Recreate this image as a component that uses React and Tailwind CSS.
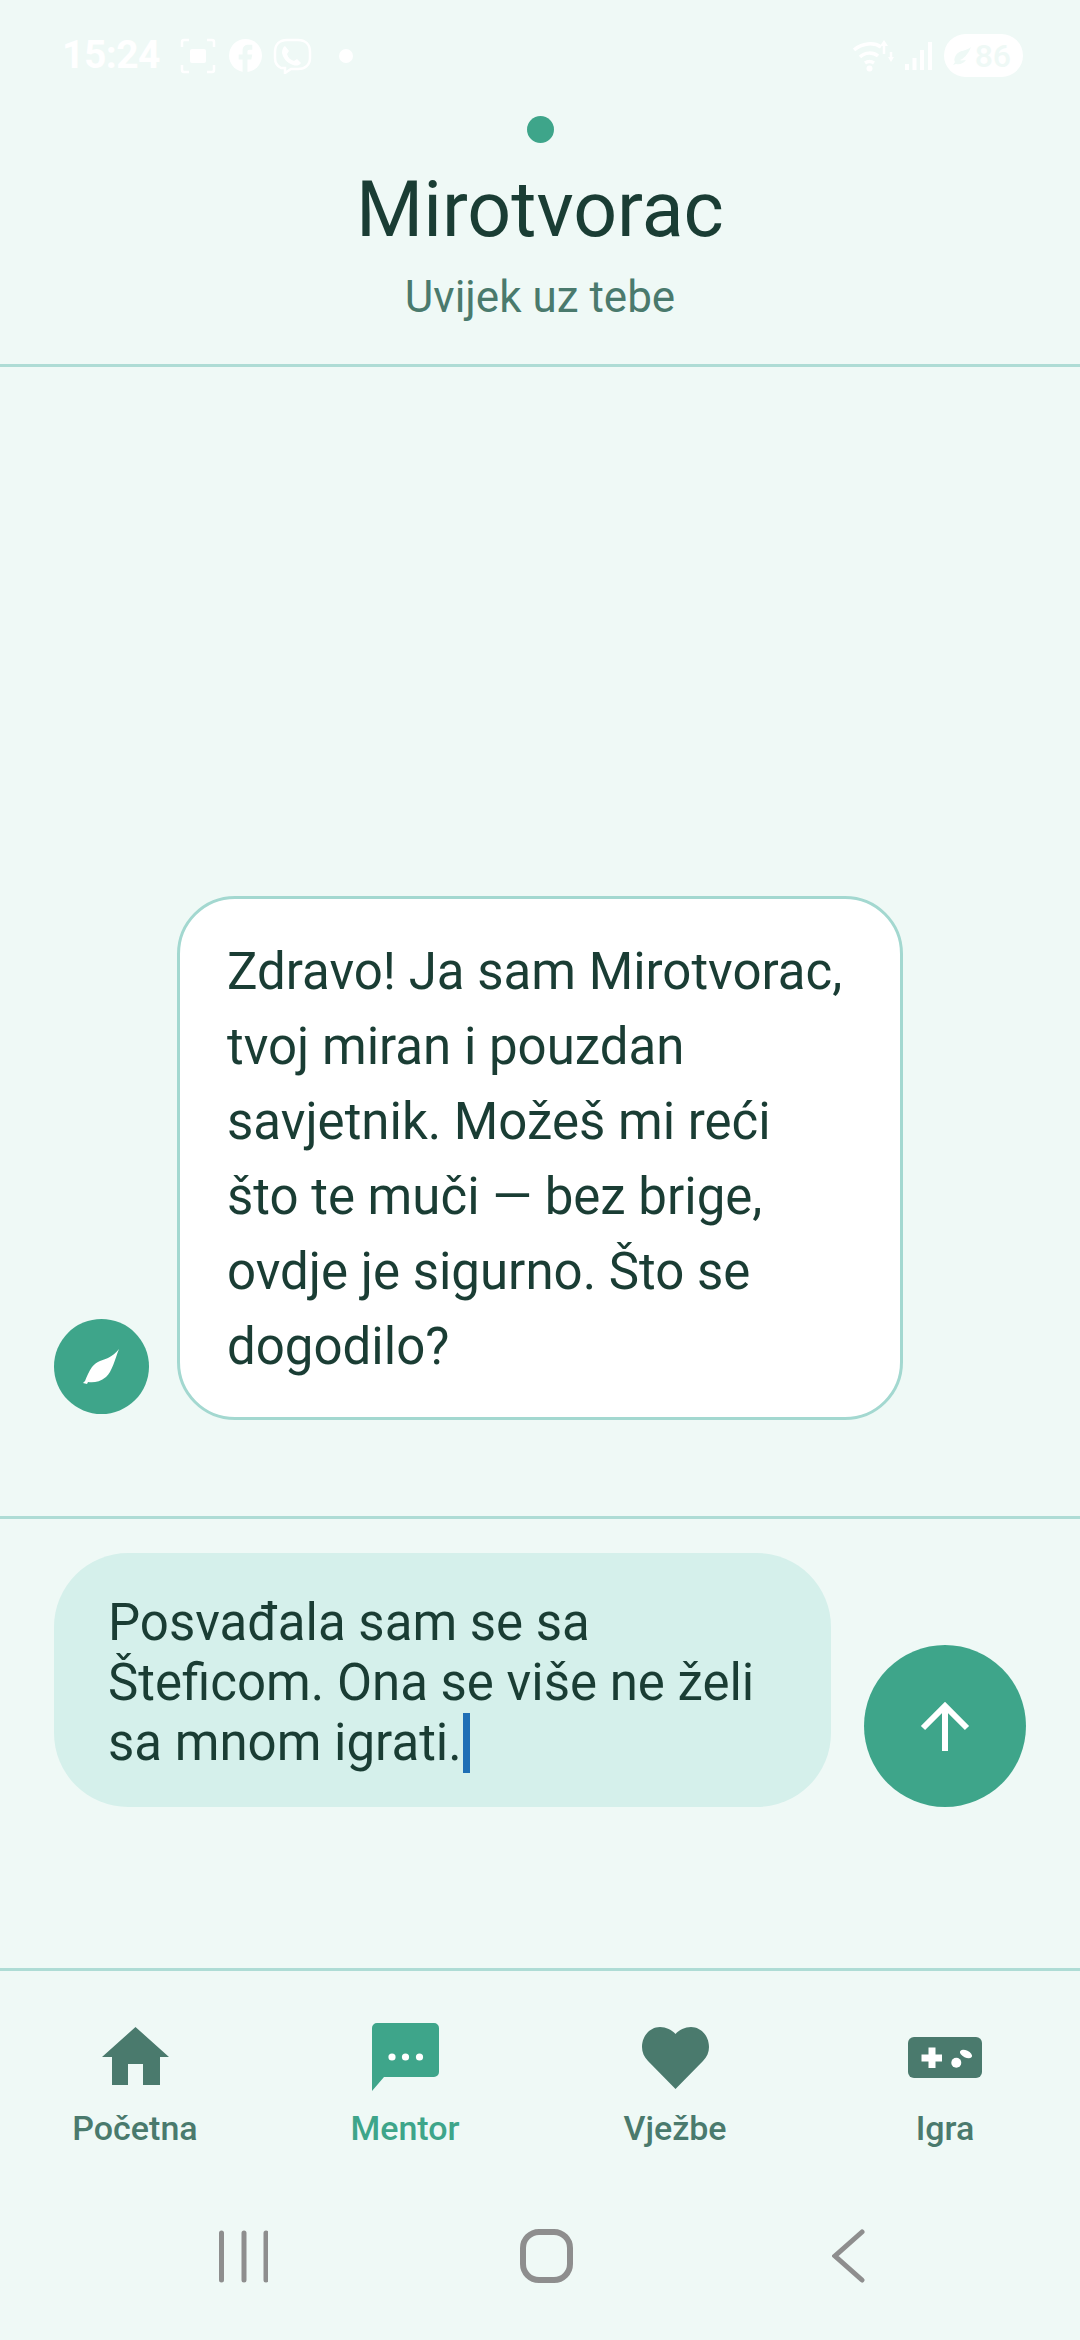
import React from "react";

const muted = "#4a7a6d";
const accent = "#3ea58a";

function StatusBar() {
  return (
    <div className="flex h-[111px] items-center justify-between pl-[62px] pr-[57px] text-white">
      <div className="flex items-center">
        <span className="w-[98px] text-[39px] leading-none font-bold tracking-[-0.5px] whitespace-nowrap">15:24</span>
        <svg className="ml-[20px]" width="36" height="36" viewBox="0 0 36 36" fill="none" stroke="#fff" strokeWidth="2.500">
          <path d="M2 9V4a2 2 0 0 1 2-2h5M27 2h5a2 2 0 0 1 2 2v5M34 27v5a2 2 0 0 1-2 2h-5M9 34H4a2 2 0 0 1-2-2v-5" />
          <rect x="10" y="11" width="16" height="14" rx="2" fill="#fff" stroke="none" />
        </svg>
        <svg className="ml-[13px]" width="33" height="33" viewBox="0 0 34 34">
          <circle cx="17" cy="17" r="17" fill="#fff" />
          <path d="M14 34V21h-4v-5h4v-4c0-4 2.500-6 6-6h4v5h-3c-1.500 0-2 .7-2 2v3h5l-1 5h-4v13z" fill="#eff9f6" />
        </svg>
        <svg className="ml-[11px]" width="39" height="36" viewBox="0 0 39 36" fill="none" stroke="#fff" strokeWidth="2.500">
          <path d="M8 30c-4-2-6-5-6-10v-6C2 6 7 2 14 2h11c7 0 12 4 12 12v6c0 7-5 11-12 11h-7l-6 4 0-5z" />
          <path d="M12 8l4 5-2 3c1 4 4 6 7 7l3-2 4 4c-2 3-5 3-8 2-6-2-10-7-11-12 0-3 1-6 3-7z" fill="#fff" stroke="none" />
        </svg>
        <span className="ml-[27px] h-[14px] w-[14px] rounded-full bg-white" />
      </div>
      <div className="flex items-center">
        <svg width="42" height="32" viewBox="0 0 42 32" fill="none" stroke="#fff" strokeWidth="3.500">
          <path d="M1 10c8-7 20-8 27-3M7 17c5-5 13-5 18-1M12 23c3-2 6-2 9 0" />
          <circle cx="16.500" cy="28.500" r="3" fill="#fff" stroke="none" />
          <path d="M31 0l-4 6h8zM38 22l3-5h-6z" fill="#fff" stroke="none" />
          <path d="M38 12v6M31 6v8" strokeWidth="2.500" />
        </svg>
        <svg className="ml-[10px]" width="27" height="28" viewBox="0 0 27 28" fill="#fff">
          <rect x="0" y="22" width="4" height="6" />
          <rect x="7.500" y="16" width="4" height="12" />
          <rect x="15" y="8" width="4" height="20" />
          <rect x="23" y="0" width="4" height="28" />
        </svg>
        <div className="ml-[12px] flex h-[43px] w-[79px] items-center justify-end rounded-full bg-white pr-[12px] text-[32px] leading-none font-medium text-[#eff9f6]">
          <svg className="mr-[4px]" width="18" height="18" viewBox="0 0 18 18" fill="#eff9f6">
            <path d="M18 0C14 4 6 3 3 8 1 11 1 14 2 15L0 18l3-1c4 1 8-1 10-4-2 0-5 1-6 0 3-1 8-5 11-13z" />
          </svg>
          86
        </div>
      </div>
    </div>
  );
}

function Header() {
  return (
    <header className="flex h-[256px] flex-col items-center border-b-[3px] border-[#aedcd5] pt-[5px]">
      <span className="h-[27px] w-[27px] rounded-full bg-[#3ea58a]" />
      <h1 className="mt-[22px] text-[77px] leading-[90px] font-normal text-[#1a3d34]">Mirotvorac</h1>
      <p className="mt-[16px] text-[44px] leading-[52px] text-[#4a7a6d]">Uvijek uz tebe</p>
    </header>
  );
}

function Chat() {
  return (
    <main className="flex flex-1 items-end pl-[54px] pb-[96px]">
      <div className="flex items-end">
        <div className="mb-[6px] flex h-[95px] w-[95px] items-center justify-center rounded-full bg-[#3ea58a]">
          <svg width="37" height="37" viewBox="0 0 37 37">
            <path d="M36 1C33 5 29 8 25 10 20 12 14 13 9 19 6 23 4 28 2 33L0 35 4 36 5 34C10 35 17 34 23 29 29 24 32 11 36 1z" fill="#fff" />
          </svg>
        </div>
        <div className="ml-[28px] w-[726px] rounded-[58px] border-[3px] border-[#a3d8d0] bg-white pl-[47px] pr-[30px] pt-[35px] pb-[33px]">
          <p className="text-[51px] leading-[75px] text-[#1a3d34] whitespace-nowrap">
            Zdravo! Ja sam Mirotvorac,<br />
            tvoj miran i pouzdan<br />
            savjetnik. Možeš mi reći<br />
            što te muči — bez brige,<br />
            ovdje je sigurno. Što se<br />
            dogodilo?
          </p>
        </div>
      </div>
    </main>
  );
}

function Composer() {
  return (
    <section className="h-[455px] border-t-[3px] border-b-[3px] border-[#aedcd5] px-[54px] pt-[34px]">
      <div className="flex items-end">
        <div className="h-[254px] w-[777px] rounded-[74px] bg-[#d5f0eb] pl-[54px] pt-[40px]">
          <p className="text-[51px] leading-[60px] text-[#1a3d34] whitespace-nowrap">
            Posvađala sam se sa<br />
            Šteficom. Ona se više ne želi<br />
            sa mnom igrati.<span className="ml-[1px] inline-block h-[60px] w-[7px] bg-[#1f6fb5] align-top" />
          </p>
        </div>
        <button className="ml-[33px] flex h-[162px] w-[162px] items-center justify-center rounded-full bg-[#3ea58a]">
          <svg width="50" height="50" viewBox="0 0 50 50" fill="none" stroke="#fff" strokeWidth="6">
            <path d="M25 50V4M3 27L25 5l22 22" />
          </svg>
        </button>
      </div>
    </section>
  );
}

function NavItem({ label, active, children }) {
  return (
    <div className="flex w-[270px] flex-col items-center">
      <div className="flex h-[72px] items-end justify-center">{children}</div>
      <span className={`mt-[13px] text-[34px] leading-[40px] font-medium ${active ? "text-[#3ea58a]" : "text-[#4a7a6d]"}`}>{label}</span>
    </div>
  );
}

function Nav() {
  return (
    <nav className="flex h-[230px] pt-[52px]">
      <NavItem label="Početna">
        <svg className="mb-[10px]" width="67" height="58" viewBox="0 0 67 58" fill={muted}>
          <path d="M33.500 0L67 30h-9v28H41V37H26v21H10V30H0z" />
        </svg>
      </NavItem>
      <NavItem label="Mentor" active>
        <svg width="67" height="69" viewBox="0 0 67 69" fill={accent} className="mb-[3px]">
          <path d="M5 0h57a5 5 0 0 1 5 5v44a5 5 0 0 1-5 5H12L0 68V5a5 5 0 0 1 5-5z" />
          <circle cx="20" cy="34" r="3.600" fill="#fff" />
          <circle cx="33.500" cy="34" r="3.600" fill="#fff" />
          <circle cx="47.500" cy="34" r="3.600" fill="#fff" />
        </svg>
      </NavItem>
      <NavItem label="Vježbe">
        <svg width="67" height="62" viewBox="0 0 67 62" fill={muted} className="mb-[6px]">
          <path d="M33.500 62L6 34C2 30 0 25 0 20 0 9 8 0 18 0c6 0 12 3 15.500 7C37 3 43 0 49 0c10 0 18 9 18 20 0 5-2 10-6 14z" />
        </svg>
      </NavItem>
      <NavItem label="Igra">
        <svg width="74" height="41" viewBox="0 0 74 41" fill={muted} className="mb-[17px]">
          <rect width="74" height="41" rx="6" />
          <path d="M20.500 10.500h7V17.500h6.500v7h-6.500V31h-7v-6.500H13.500v-7h7z" fill="#fff" />
          <circle cx="48.300" cy="25.700" r="5" fill="#fff" />
          <ellipse cx="58" cy="17" rx="6.500" ry="3.500" fill="#fff" transform="rotate(25 58 17)" />
        </svg>
      </NavItem>
    </nav>
  );
}

function SystemNav() {
  return (
    <div className="flex h-[139px] items-start pl-[218px] pt-[28px]">
      <svg width="50" height="54" viewBox="0 0 50 54" stroke="#8e8e8e" strokeWidth="5" strokeLinecap="round">
        <path d="M3.500 4v47M26 4v47M48 4v47" />
      </svg>
      <svg className="ml-[252px]" width="53" height="54" viewBox="0 0 53 54" fill="none" stroke="#8e8e8e" strokeWidth="6">
        <rect x="3" y="3" width="47" height="48" rx="16" />
      </svg>
      <svg className="ml-[259px]" width="33" height="54" viewBox="0 0 33 54" fill="none" stroke="#8e8e8e" strokeWidth="5" strokeLinecap="round">
        <path d="M30 3L3 27l27 24" />
      </svg>
    </div>
  );
}

export default function App() {
  return (
    <div className="flex h-[2340px] w-[1080px] flex-col overflow-hidden bg-[#eff9f6] font-['Roboto',sans-serif]">
      <StatusBar />
      <Header />
      <Chat />
      <Composer />
      <Nav />
      <SystemNav />
    </div>
  );
}
